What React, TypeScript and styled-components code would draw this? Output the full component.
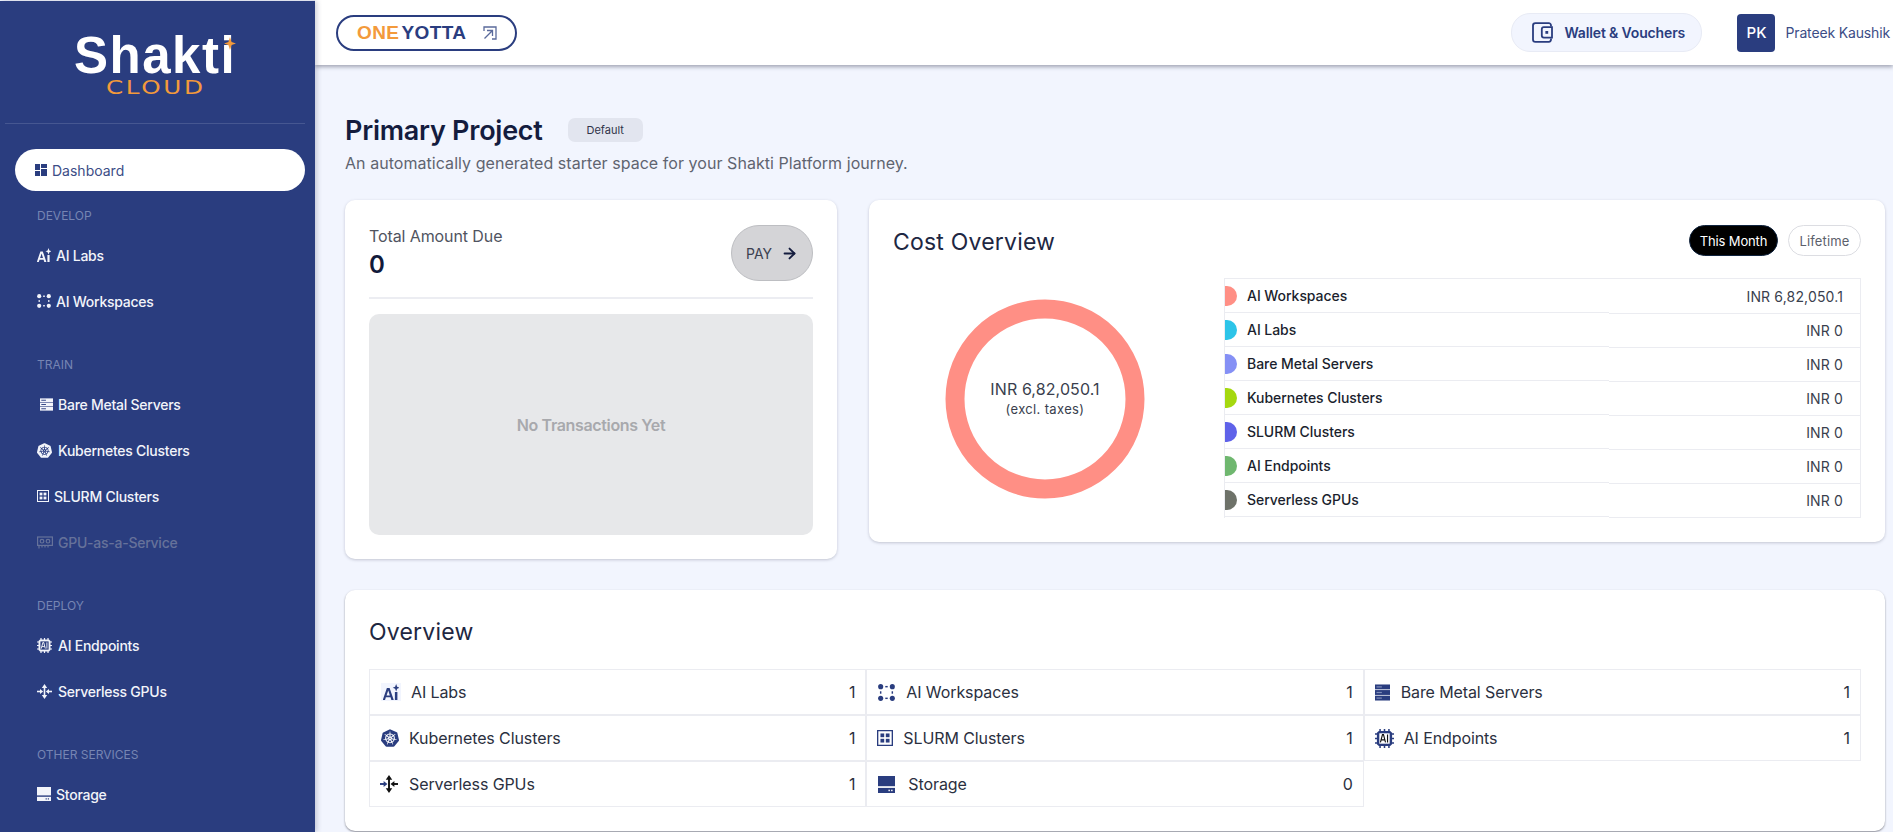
import React from 'react';
import styled, { createGlobalStyle } from 'styled-components';
import { SiKubernetes } from 'react-icons/si';
import { ArrowRight } from 'lucide-react';

const Global = createGlobalStyle`
  html, body { margin: 0; padding: 0; height: 100%; overflow: hidden; background: #f2f5fe; }
  * { box-sizing: border-box; }
  body { font-family: Inter, "Noto Sans", sans-serif; }
`;

const NAVY = '#2a3d7f';

const Shell = styled.div`
  display: flex;
  width: 1893px;
  height: 832px;
  overflow: hidden;
  background: #f2f5fe;
`;
const Sidebar = styled.aside`
  flex: 0 0 315px;
  margin-top: 1px;
  background: ${NAVY};
  box-shadow: 2px 0 5px rgba(30, 40, 80, 0.22);
  position: relative;
  z-index: 2;
  padding-right: 10px;
`;
const LogoBlock = styled.div`
  height: 122px;
  padding: 36px 0 0 74px;
`;
const LogoMark = styled.div`
  position: relative;
  width: 160px;
  height: 38px;
  color: #fff;
  font: 800 51px/38px "Liberation Sans", Inter, sans-serif;
  letter-spacing: 1.5px;
  white-space: nowrap;
`;
const LogoStar = styled.svg`
  position: absolute;
  right: -2px;
  top: 0;
`;
const LogoSub = styled.div`
  margin: 4px 0 0 32px;
  width: 100px;
  color: #f39a3b;
  font: 500 19px/16px "DejaVu Sans", sans-serif;
  letter-spacing: 2px;
  transform: scaleX(1.3);
  transform-origin: left center;
`;
const SideRule = styled.div`
  height: 1px;
  margin-left: 5px;
  background: #465791;
`;
const ActiveItem = styled.div`
  display: flex;
  align-items: center;
  height: 42px;
  margin: 25px 0 15px 15px;
  padding-left: 20px;
  gap: 5px;
  background: #fff;
  border-radius: 21px;
  color: #3c4d86;
  font-size: 14px;
`;
const SectionLabel = styled.div<{ $top?: number }>`
  height: 20px;
  margin: ${p => p.$top ?? 0}px 0 6px 37px;
  color: #7685b3;
  font-size: 12px;
  line-height: 20px;
`;
const NavItem = styled.div<{ $off?: boolean; $inset?: number; $gap: number }>`
  display: flex;
  align-items: center;
  height: 46px;
  padding-left: ${p => p.$inset ?? 37}px;
  gap: ${p => p.$gap}px;
  color: ${p => (p.$off ? '#66729a' : '#f2f4fa')};
  font-size: 14px;
  font-weight: 500;
  letter-spacing: -0.25px;
`;
const Column = styled.div`
  flex: 1;
  min-width: 0;
  display: flex;
  flex-direction: column;
`;
const TopBar = styled.header`
  flex: 0 0 65px;
  display: flex;
  align-items: center;
  justify-content: space-between;
  padding: 0 3px 0 21px;
  background: #fff;
  box-shadow: 0 2px 4px rgba(40, 45, 70, 0.4);
  position: relative;
  z-index: 1;
`;
const BrandLink = styled.div`
  display: flex;
  align-items: center;
  width: 181px;
  height: 36px;
  padding-left: 19px;
  border: 2px solid ${NAVY};
  border-radius: 18px;
  font-size: 19px;
  font-weight: 700;
  letter-spacing: 0.4px;
`;
const BrandOne = styled.span`
  color: #f39a3b;
  font-family: "Liberation Sans", sans-serif;
  margin-right: 2px;
`;
const BrandYotta = styled.span`
  color: ${NAVY};
  font-family: "Liberation Sans", sans-serif;
  margin-right: 17px;
`;
const TopRight = styled.div`
  display: flex;
  align-items: center;
`;
const WalletPill = styled.div`
  display: flex;
  align-items: center;
  gap: 11px;
  width: 191px;
  height: 39px;
  padding-left: 20px;
  border: 1px solid #e8ebf5;
  border-radius: 19px;
  background: #f2f5fe;
  color: ${NAVY};
  font-size: 14px;
  font-weight: 600;
  letter-spacing: -0.15px;
  white-space: nowrap;
`;
const Avatar = styled.div`
  display: flex;
  align-items: center;
  justify-content: center;
  width: 38px;
  height: 38px;
  margin: 0 10px 0 35px;
  border-radius: 4px;
  background: ${NAVY};
  color: #fff;
  font-size: 15px;
  font-weight: 500;
`;
const UserName = styled.div`
  color: #3c4d86;
  font-size: 14px;
  letter-spacing: -0.15px;
  white-space: nowrap;
`;
const Main = styled.main`
  flex: 1;
  padding: 53px 8px 0 30px;
`;
const TitleRow = styled.div`
  display: flex;
  align-items: center;
  height: 24px;
`;
const Title = styled.h1`
  margin: 2px 25px 0 0;
  color: #141c3e;
  font-size: 27px;
  font-weight: 600;
  letter-spacing: -0.25px;
  line-height: 24px;
`;
const Badge = styled.span`
  display: flex;
  align-items: center;
  justify-content: center;
  width: 75px;
  height: 24px;
  border-radius: 7px;
  background: #e2e5ef;
  color: #30344a;
  font-size: 11px;
`;
const Subtitle = styled.p`
  margin: 9px 0 0;
  color: #5f6470;
  font-size: 16px;
  line-height: 24px;
  letter-spacing: 0.05px;
`;
const CardRow = styled.div`
  display: flex;
  align-items: flex-start;
  gap: 32px;
  margin-top: 25px;
`;
const Card = styled.section`
  background: #fff;
  border-radius: 10px;
  box-shadow: 0 1px 3px rgba(50, 55, 80, 0.25);
`;
const DueCard = styled(Card)`
  flex: 0 0 492px;
  height: 359px;
  padding: 25px 24px 24px;
  display: flex;
  flex-direction: column;
`;
const DueHead = styled.div`
  display: flex;
  justify-content: space-between;
  height: 56px;
`;
const DueLabel = styled.div`
  margin-top: 1px;
  color: #50545f;
  font-size: 16px;
  line-height: 20px;
  letter-spacing: -0.1px;
`;
const DueValue = styled.div`
  margin-top: 5px;
  color: #111a3a;
  font-size: 24px;
  font-weight: 600;
  line-height: 28px;
`;
const PayButton = styled.div`
  display: flex;
  align-items: center;
  justify-content: center;
  gap: 9px;
  width: 82px;
  height: 56px;
  border: 1px solid #bdbec2;
  border-radius: 28px;
  background: #d4d4d7;
  color: #3c4150;
  font-size: 14px;
`;
const DueRule = styled.div`
  height: 2px;
  margin: 16px 0 15px;
  background: #ecedf2;
`;
const EmptyBox = styled.div`
  flex: 1;
  display: flex;
  align-items: center;
  justify-content: center;
  border-radius: 10px;
  background: #e7e8ea;
  color: #a8a9ad;
  font-size: 16px;
  font-weight: 600;
  letter-spacing: -0.35px;
`;
const CostCard = styled(Card)`
  flex: 1;
  height: 342px;
  padding: 25px 24px 0;
`;
const CostHead = styled.div`
  display: flex;
  align-items: center;
  justify-content: space-between;
  height: 31px;
  margin-bottom: 22px;
`;
const CardTitle = styled.h2`
  margin: 0;
  color: #1e2742;
  font-size: 23px;
  font-weight: 400;
  line-height: 24px;
  letter-spacing: 0.2px;
`;
const CostTitle = styled(CardTitle)`
  margin-top: 2px;
`;
const Toggle = styled.div`
  display: flex;
  gap: 10px;
`;
const TogglePill = styled.div<{ $on?: boolean }>`
  display: flex;
  align-items: center;
  justify-content: center;
  height: 31px;
  width: ${p => (p.$on ? 89 : 73)}px;
  border: 1px solid ${p => (p.$on ? '#10243f' : '#dcdde2')};
  border-radius: 16px;
  background: ${p => (p.$on ? '#000' : '#fff')};
  color: ${p => (p.$on ? '#fff' : '#5c606c')};
  font-size: 13px;
  letter-spacing: ${p => (p.$on ? '-0.15px' : '0.15px')};
`;
const CostBody = styled.div`
  display: flex;
`;
const ChartWrap = styled.div`
  flex: 0 0 331px;
  display: flex;
  justify-content: center;
  padding: 21px 27px 0 0;
`;
const Donut = styled.div`
  position: relative;
  width: 200px;
  height: 200px;
`;
const DonutText = styled.div`
  position: absolute;
  inset: 0;
  display: flex;
  flex-direction: column;
  align-items: center;
  justify-content: center;
  color: #3a3f4e;
  font-size: 16px;
  line-height: 20px;
  letter-spacing: 0.1px;
`;
const DonutNote = styled.span`
  font-size: 13px;
  letter-spacing: 0.35px;
`;
const CostTable = styled.div`
  flex: 1;
  display: flex;
  border: 1px solid #ebecf1;
  border-width: 1px 1px 0 1px;
`;
const NameCol = styled.div`
  flex: 0 0 384px;
`;
const ValueCol = styled.div`
  flex: 1;
  padding-top: 1px;
`;
const NameCell = styled.div`
  display: flex;
  align-items: center;
  gap: 10px;
  height: 34px;
  border-bottom: 1px solid #ebecf1;
  color: #1b1f2e;
  font-size: 14px;
  font-weight: 500;
  letter-spacing: -0.05px;
`;
const Swatch = styled.span<{ $c: string }>`
  width: 12px;
  height: 20px;
  border-radius: 0 10px 10px 0;
  background: ${p => p.$c};
`;
const ValueCell = styled.div`
  display: flex;
  align-items: center;
  justify-content: flex-end;
  height: 34px;
  padding-right: 17px;
  border-bottom: 1px solid #ebecf1;
  color: #3a3f4e;
  font-size: 14px;
  letter-spacing: 0.15px;
`;
const OverviewCard = styled(Card)`
  height: 241px;
  margin-top: 31px;
  padding: 30px 24px 0;
  box-shadow: 0 1px 2px rgba(40, 40, 50, 0.5);
`;
const OverviewTitle = styled(CardTitle)`
  margin-bottom: 25px;
`;
const OverviewGrid = styled.div`
  display: grid;
  grid-template-columns: repeat(3, 1fr);
`;
const Tile = styled.div<{ $inset: number; $gap: number }>`
  display: flex;
  align-items: center;
  height: 46px;
  padding: 0 10px 0 ${p => p.$inset}px;
  gap: ${p => p.$gap}px;
  border: 1px solid #ebecf1;
  color: #2b3040;
  font-size: 16px;
  letter-spacing: -0.1px;
`;
const TileCount = styled.span`
  margin-left: auto;
`;
const Glyph = styled.svg`
  flex: none;
  display: block;
`;

type IconProps = { size?: number; tone?: string };

const DashIcon = () => (
  <Glyph width="12" height="12" viewBox="0 0 12 12" fill={NAVY}>
    <rect width="5" height="6" /><rect x="6" width="6" height="4" /><rect y="7" width="5" height="5" /><rect x="6" y="5" width="6" height="7" />
  </Glyph>
);
const LabsIcon = ({ size = 14 }: IconProps) => (
  <Glyph width={size} height={size} viewBox="0 0 14 14" fill="currentColor">
    <path fillRule="evenodd" d="M-.2 14 3.4 3.4h2.4L9.4 14H7.3l-.7-2.3H2.5L1.8 14H-.2Zm3.3-4h2.9L4.6 5.6 3.1 10Z" />
    <rect x="10.4" y="7" width="2.2" height="7" />
    <path d="M11.5 0l.9 2.4 2.1.9-2.1.9-.9 2.4-.9-2.4-2.1-.9 2.1-.9Z" />
  </Glyph>
);
const WorkIcon = ({ size = 14 }: IconProps) => (
  <Glyph width={size} height={size} viewBox="0 0 14 14" fill="currentColor">
    <circle cx="2.2" cy="2.2" r="2.1" /><circle cx="11.8" cy="2.2" r="2.1" /><circle cx="2.2" cy="11.8" r="2.1" /><circle cx="11.8" cy="11.8" r="2.1" />
    <rect x="6" y="1.6" width="2" height="1.2" /><rect x="6" y="11.2" width="2" height="1.2" /><rect x="1.6" y="6" width="1.2" height="2" /><rect x="11.2" y="6" width="1.2" height="2" />
  </Glyph>
);
const BareIcon = ({ width = 13, height = 13, mark = NAVY }: { width?: number; height?: number; mark?: string }) => (
  <Glyph width={width} height={height} viewBox="0 0 14 14" preserveAspectRatio="none" fill="currentColor">
    <rect y="0.4" width="14" height="4" /><rect y="5" width="14" height="4" /><rect y="9.6" width="14" height="4" />
    <rect x="1.4" y="1.9" width="5" height="1" fill={mark} /><rect x="1.4" y="6.5" width="5" height="1" fill={mark} /><rect x="1.4" y="11.1" width="5" height="1" fill={mark} />
  </Glyph>
);
const SlurmIcon = ({ size = 12 }: IconProps) => (
  <Glyph width={size} height={size} viewBox="0 0 12 12" fill="currentColor">
    <path fillRule="evenodd" d="M0 0h12v12H0V0Zm1 1v10h10V1H1Z" />
    <rect x="2.6" y="2.6" width="2.8" height="2.8" /><rect x="6.6" y="2.6" width="2.8" height="2.8" /><rect x="2.6" y="6.6" width="2.8" height="2.8" /><rect x="6.6" y="6.6" width="2.8" height="2.8" />
  </Glyph>
);
const GpuIcon = () => (
  <Glyph width="16" height="13" viewBox="0 0 16 13" fill="none" stroke="currentColor" strokeWidth="1.2">
    <rect x="0.6" y="1" width="14.8" height="8.4" />
    <circle cx="5" cy="5.2" r="1.8" /><circle cx="11" cy="5.2" r="1.8" />
    <path d="M2 9.5v3M5 9.5v2M8 9.5v2M11 9.5v2" />
  </Glyph>
);
const ChipIcon = ({ size = 15, tone }: IconProps) => (
  <Glyph width={size} height={size} viewBox="0 0 15 15">
    <path d="M3 1.5h9l1.5 1.5v9L12 13.5H3L1.5 12V3Z" fill="currentColor" />
    <path d="M4 0v2M7.5 0v2M11 0v2M4 13v2M7.5 13v2M11 13v2M0 4h2M0 7.5h2M0 11h2M13 4h2M13 7.5h2M13 11h2" stroke="currentColor" strokeWidth="1.2" />
    <rect x="3.4" y="3.4" width="8.2" height="8.2" fill={tone ?? NAVY} />
    <path d="M4.3 10.6 5.9 4.4h.8l1.6 6.2M4.9 8.6h2.8M9.9 4.4v6.2" fill="none" stroke={tone ? '#111' : '#fff'} strokeWidth="0.9" />
  </Glyph>
);
const MoveIcon = ({ size = 15, tone }: IconProps) => {
  const c = tone ?? 'currentColor';
  return (
    <Glyph width={size} height={size} viewBox="0 0 15 15" fill="none" strokeWidth="1.6">
      <path d="M7.5 2v11" stroke={c} />
      <path d="M4.8 4 7.5 0l2.7 4ZM4.8 11l2.7 4 2.7-4Z" fill={c} stroke="none" />
      <path d="M0 7.5h3.5" stroke="currentColor" />
      <path d="M3 4.9 6.2 7.5 3 10.1Z" fill="currentColor" />
      <path d="M11.5 7.5H15" stroke={c} />
      <path d="M12 4.9 8.8 7.5l3.2 2.6Z" fill={c} />
    </Glyph>
  );
};
const StoreIcon = ({ width = 14, height = 14, cut = NAVY }: { width?: number; height?: number; cut?: string }) => (
  <Glyph width={width} height={height} viewBox="0 0 14 14" fill="currentColor">
    <rect width="14" height="8.4" />
    <rect y="9.8" width="14" height="4.2" />
    <rect x="8.6" y="11.3" width="1.2" height="1.2" fill={cut} /><rect x="10.8" y="11.3" width="1.2" height="1.2" fill={cut} />
  </Glyph>
);
const KubeIcon = ({ size = 15 }: IconProps) => <SiKubernetes size={size} style={{ flex: 'none' }} />;

const WalletIcon = () => (
  <Glyph width="21" height="21" viewBox="0 0 21 21" fill="none" stroke={NAVY} strokeWidth="1.8">
    <path d="M19 4.5V3.4A2.2 2.2 0 0 0 16.8 1.2H3.4A2.4 2.4 0 0 0 1 3.6v13.8a2.4 2.4 0 0 0 2.4 2.4h13.4a2.2 2.2 0 0 0 2.2-2.2v-1.1" />
    <path d="M20 5.2h-8.2a2 2 0 0 0-2 2v6.4a2 2 0 0 0 2 2H20Z" />
    <rect x="13.4" y="9" width="2.8" height="2.8" fill={NAVY} stroke="none" />
  </Glyph>
);
const ExternalIcon = () => (
  <Glyph width="14" height="14" viewBox="0 0 14 14" fill="none" stroke="#5a6a9b" strokeWidth="1.3">
    <path d="M1 5V1h12v12H9" />
    <path d="M1.5 12.5 9.5 4.5M4 4.5h5.5V10" />
  </Glyph>
);

const costRows = [
  ['AI Workspaces', 'INR 6,82,050.1', '#ff8f85'],
  ['AI Labs', 'INR 0', '#2dc4e8'],
  ['Bare Metal Servers', 'INR 0', '#8590f5'],
  ['Kubernetes Clusters', 'INR 0', '#a5d80f'],
  ['SLURM Clusters', 'INR 0', '#5f62e9'],
  ['AI Endpoints', 'INR 0', '#6fb76f'],
  ['Serverless GPUs', 'INR 0', '#6e7269'],
];

const TileIcon = styled.span`
  display: flex;
  color: ${NAVY};
`;
const LabsBack = styled(TileIcon)`
  background: #f2f5fe;
  padding: 1px 2px;
`;

const tiles: { name: string; count: number; inset: number; gap: number; icon: React.ReactNode }[] = [
  { name: 'AI Labs', count: 1, inset: 11, gap: 10, icon: <LabsBack><LabsIcon size={16} /></LabsBack> },
  { name: 'AI Workspaces', count: 1, inset: 11, gap: 11, icon: <TileIcon><WorkIcon size={17} /></TileIcon> },
  { name: 'Bare Metal Servers', count: 1, inset: 10, gap: 11, icon: <TileIcon><BareIcon width={15} height={17} mark="#7f8db8" /></TileIcon> },
  { name: 'Kubernetes Clusters', count: 1, inset: 11, gap: 10, icon: <TileIcon><KubeIcon size={18} /></TileIcon> },
  { name: 'SLURM Clusters', count: 1, inset: 10, gap: 10, icon: <TileIcon><SlurmIcon size={16} /></TileIcon> },
  { name: 'AI Endpoints', count: 1, inset: 10, gap: 10, icon: <TileIcon><ChipIcon size={19} tone="#fff" /></TileIcon> },
  { name: 'Serverless GPUs', count: 1, inset: 10, gap: 11, icon: <TileIcon><MoveIcon size={18} tone="#111" /></TileIcon> },
  { name: 'Storage', count: 0, inset: 11, gap: 13, icon: <TileIcon><StoreIcon width={17} height={17} cut="#fff" /></TileIcon> },
];

export default function App() {
  return (
    <Shell>
      <Global />
      <Sidebar>
        <LogoBlock>
          <LogoMark>
            Shakti
            <LogoStar width="12" height="13" viewBox="0 0 12 13"><path d="M6 0l1.6 4.9L12 6.5 7.6 8.1 6 13 4.4 8.1 0 6.5l4.4-1.6Z" fill="#f39a3b" /></LogoStar>
          </LogoMark>
          <LogoSub>CLOUD</LogoSub>
        </LogoBlock>
        <SideRule />
        <ActiveItem><DashIcon />Dashboard</ActiveItem>
        <SectionLabel>DEVELOP</SectionLabel>
        <NavItem $gap={5}><LabsIcon />AI Labs</NavItem>
        <NavItem $gap={5}><WorkIcon />AI Workspaces</NavItem>
        <SectionLabel $top={31}>TRAIN</SectionLabel>
        <NavItem $inset={40} $gap={5}><BareIcon />Bare Metal Servers</NavItem>
        <NavItem $gap={6}><KubeIcon />Kubernetes Clusters</NavItem>
        <NavItem $gap={5}><SlurmIcon />SLURM Clusters</NavItem>
        <NavItem $off $gap={5}><GpuIcon />GPU-as-a-Service</NavItem>
        <SectionLabel $top={31}>DEPLOY</SectionLabel>
        <NavItem $gap={6}><ChipIcon />AI Endpoints</NavItem>
        <NavItem $gap={6}><MoveIcon />Serverless GPUs</NavItem>
        <SectionLabel $top={31}>OTHER SERVICES</SectionLabel>
        <NavItem $gap={5}><StoreIcon />Storage</NavItem>
      </Sidebar>
      <Column>
        <TopBar>
          <BrandLink>
            <BrandOne>ONE</BrandOne>
            <BrandYotta>YOTTA</BrandYotta>
            <ExternalIcon />
          </BrandLink>
          <TopRight>
            <WalletPill><WalletIcon />Wallet &amp; Vouchers</WalletPill>
            <Avatar>PK</Avatar>
            <UserName>Prateek Kaushik</UserName>
          </TopRight>
        </TopBar>
        <Main>
          <TitleRow>
            <Title>Primary Project</Title>
            <Badge>Default</Badge>
          </TitleRow>
          <Subtitle>An automatically generated starter space for your Shakti Platform journey.</Subtitle>
          <CardRow>
            <DueCard>
              <DueHead>
                <div>
                  <DueLabel>Total Amount Due</DueLabel>
                  <DueValue>0</DueValue>
                </div>
                <PayButton>PAY <ArrowRight size={17} color="#141c3e" strokeWidth={2.6} /></PayButton>
              </DueHead>
              <DueRule />
              <EmptyBox>No Transactions Yet</EmptyBox>
            </DueCard>
            <CostCard>
              <CostHead>
                <CostTitle>Cost Overview</CostTitle>
                <Toggle>
                  <TogglePill $on>This Month</TogglePill>
                  <TogglePill>Lifetime</TogglePill>
                </Toggle>
              </CostHead>
              <CostBody>
                <ChartWrap>
                  <Donut>
                    <svg width="200" height="200" viewBox="0 0 200 200">
                      <circle cx="100" cy="100" r="90" fill="none" stroke="#ff8f85" strokeWidth="19" />
                    </svg>
                    <DonutText>
                      <span>INR 6,82,050.1</span>
                      <DonutNote>(excl. taxes)</DonutNote>
                    </DonutText>
                  </Donut>
                </ChartWrap>
                <CostTable>
                  <NameCol>
                    {costRows.map(r => (
                      <NameCell key={r[0]}><Swatch $c={r[2]} />{r[0]}</NameCell>
                    ))}
                  </NameCol>
                  <ValueCol>
                    {costRows.map(r => (
                      <ValueCell key={r[0]}>{r[1]}</ValueCell>
                    ))}
                  </ValueCol>
                </CostTable>
              </CostBody>
            </CostCard>
          </CardRow>
          <OverviewCard>
            <OverviewTitle>Overview</OverviewTitle>
            <OverviewGrid>
              {tiles.map(t => (
                <Tile key={t.name} $inset={t.inset} $gap={t.gap}>
                  {t.icon}
                  {t.name}
                  <TileCount>{t.count}</TileCount>
                </Tile>
              ))}
            </OverviewGrid>
          </OverviewCard>
        </Main>
      </Column>
    </Shell>
  );
}
